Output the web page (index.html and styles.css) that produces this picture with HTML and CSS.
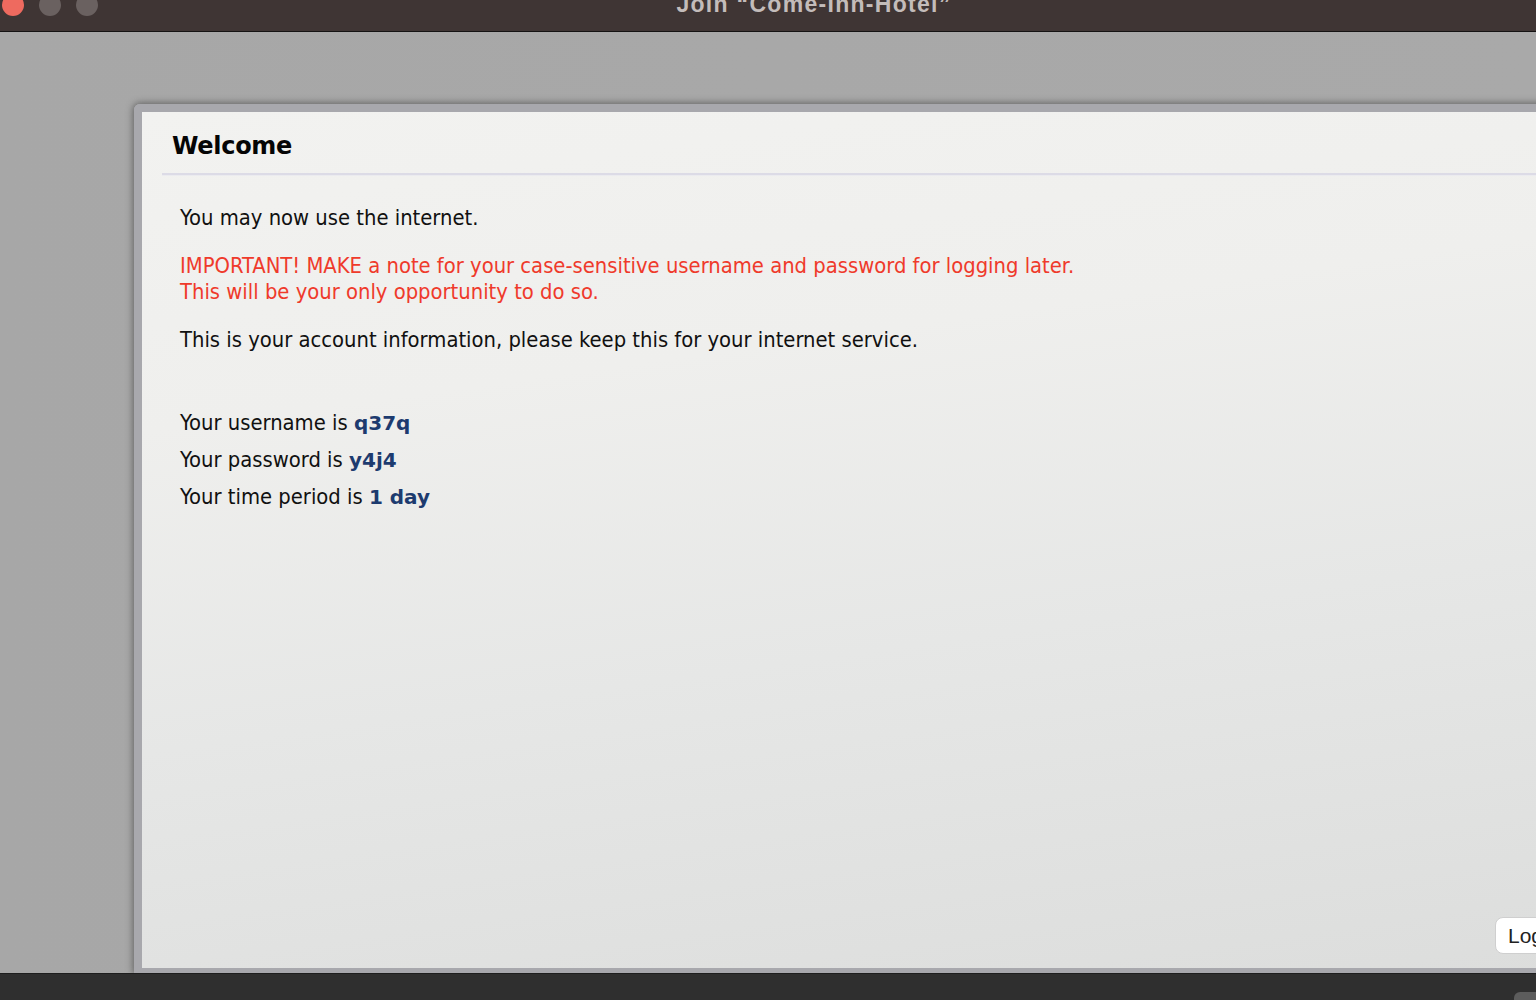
FILE: index.html
```html
<!DOCTYPE html>
<html lang="en">
<head>
<meta charset="utf-8">
<title>Join "Come-Inn-Hotel"</title>
<link rel="stylesheet" href="styles.css">
</head>
<body>
<div class="titlebar">
  <div class="lights">
    <span class="light close"></span>
    <span class="light"></span>
    <span class="light"></span>
  </div>
  <div class="title">Join “Come-Inn-Hotel”</div>
</div>
<div class="desktop">
  <div class="window">
    <div class="content">
      <h1 class="heading">Welcome</h1>
      <div class="rule"></div>
      <div class="body">
        <p class="line">You may now use the internet.</p>
        <p class="line warn">IMPORTANT! MAKE a note for your case-sensitive username and password for logging later.<br>This will be your only opportunity to do so.</p>
        <p class="line">This is your account information, please keep this for your internet service.</p>
        <div class="creds">
          <p class="cred">Your username is <b class="val">q37q</b></p>
          <p class="cred">Your password is <b class="val">y4j4</b></p>
          <p class="cred">Your time period is <b class="val">1 day</b></p>
        </div>
      </div>
      <div class="footer">
        <button class="btn">Login</button>
      </div>
    </div>
  </div>
</div>
<div class="bottombar">
  <span class="pill"></span>
</div>
</body>
</html>
```

FILE: styles.css
```css
html, body {
  margin: 0;
  padding: 0;
  width: 1536px;
  height: 1000px;
  overflow: hidden;
  background: #a6a6a6;
}

.titlebar {
  height: 31px;
  background: #3f3534;
  border-bottom: 1px solid #151313;
  display: flex;
  align-items: flex-start;
  overflow: hidden;
  position: relative;
}

.lights {
  display: flex;
  gap: 15px;
  padding-left: 2px;
  margin-top: -6px;
}

.light {
  width: 22px;
  height: 22px;
  border-radius: 50%;
  background: #6a6160;
  display: block;
}

.light.close {
  background: #ee6a5f;
}

.title {
  position: absolute;
  left: 0;
  right: 0;
  top: -11px;
  text-align: center;
  padding-left: 92px;
  font-family: "Liberation Sans", Arial, sans-serif;
  font-weight: bold;
  font-size: 23px;
  line-height: 30px;
  color: #c3bcba;
  letter-spacing: 1.3px;
}

.desktop {
  height: 941px;
  padding: 72px 0 0 134px;
  box-sizing: border-box;
  background: linear-gradient(90deg, #a7a7a7 0%, #a9a9a9 100%);
}

.window {
  width: 1520px;
  height: 869px;
  box-sizing: border-box;
  border: 8px solid #a8a8ad;
  border-right: none;
  border-bottom-width: 5px;
  border-radius: 6px 0 0 0;
  box-shadow: 0 0 7px 1px rgba(40, 40, 40, 0.55);
}

.content {
  height: 100%;
  display: flex;
  flex-direction: column;
  background: linear-gradient(172deg, #f2f2f0 0%, #efefed 30%, #e6e7e6 60%, #dcdddc 100%);
  font-family: "DejaVu Sans Condensed", "DejaVu Sans", sans-serif;
  color: #111;
}

.heading {
  margin: 0;
  padding: 19px 0 0 30px;
  height: 46px;
  box-sizing: border-box;
  font-family: "DejaVu Sans", Verdana, sans-serif;
  font-weight: bold;
  font-size: 24px;
  line-height: 30px;
  color: #050505;
  letter-spacing: -0.3px;
}

.rule {
  margin: 15px 0 0 20px;
  height: 2px;
  background: #dcdbe6;
  border-bottom: 1px solid #ebebef;
}

.body {
  flex: 1;
  padding: 29px 0 0 38px;
  font-size: 21.8px;
  line-height: 26px;
}

.line {
  margin: 0 0 22px 0;
}

.warn {
  color: #ef3a2b;
}

.creds {
  padding-top: 29px;
}

.cred {
  margin: 0;
  height: 37px;
  line-height: 37px;
}

.val {
  color: #1d3b6f;
  font-family: "DejaVu Sans", Verdana, sans-serif;
  font-weight: bold;
  font-size: 20px;
  line-height: 20px;
}

.footer {
  display: flex;
  padding: 0 0 14px 1353px;
}

.btn {
  height: 37px;
  width: 90px;
  padding: 0 0 0 12px;
  text-align: left;
  border: 1px solid #cfcfcf;
  border-radius: 8px;
  background: #fff;
  font-family: "Liberation Sans", Arial, sans-serif;
  font-size: 21px;
  color: #222;
}

.bottombar {
  height: 27px;
  background: #2f2f2f;
  border-top: 1px solid #1e1e1e;
  box-sizing: border-box;
  display: flex;
  justify-content: flex-end;
  align-items: flex-end;
  overflow: hidden;
}

.pill {
  width: 22px;
  height: 12px;
  margin-bottom: -4px;
  background: #5c5c5c;
  border-radius: 6px 0 0 0;
}
```
